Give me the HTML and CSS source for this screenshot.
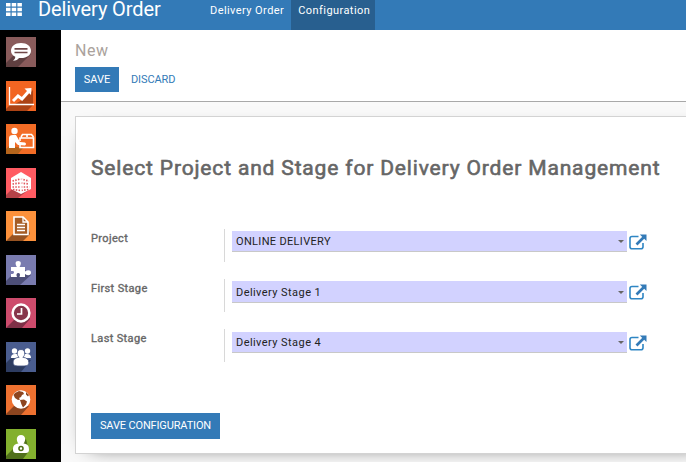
FILE: index.html
```
<!DOCTYPE html>
<html lang="en">
<head>
<meta charset="utf-8">
<title>Delivery Order</title>
<link rel="stylesheet" href="styles.css">
</head>
<body>
<header class="navbar">
  <svg class="apps" width="16" height="13" viewBox="0 0 16 13" fill="#fff"><path d="M0 0h4.500v3.400H0zM5.700 0h4.500v3.400H5.700zM11.400 0h4.500v3.400h-4.500zM0 4.800h4.500v3.400H0zM5.700 4.800h4.500v3.400H5.700zM11.400 4.800h4.500v3.400h-4.500zM0 9.600h4.500V13H0zM5.700 9.600h4.500V13H5.700zM11.400 9.600h4.500V13h-4.500z"/></svg>
  <div class="brand">Delivery Order</div>
  <nav class="menu">
    <a class="menu-item">Delivery Order</a>
    <a class="menu-item active">Configuration</a>
  </nav>
</header>
<div class="layout">
  <aside class="sidebar">
    <svg class="app" viewBox="0 0 30 30"><path fill="#895b5b" d="M0 0h30v30H0z"/><path fill="#5f3f40" d="M7 19 0 26v4h12l13-13-5-9z"/><path fill="#fff" d="M15 6c6 0 10 3.400 10 7.700S21 21 15 21l-2-.1c-1 1.600-3 2.800-6 2.800 1.500-1 2.200-2.300 2.300-3.900C6.600 18.500 5 16.400 5 13.700 5 9.400 9 6 15 6z"/><path stroke="#704849" stroke-width="1.700" d="M8.500 11.800h13M8.500 15.500h13"/></svg>
    <svg class="app" viewBox="0 0 30 30"><path fill="#f26522" d="M0 0h30v30H0z"/><path fill="#ac4315" d="m4 24-4 4v2h21l6-6V9l-9 9-9 5z"/><path fill="none" stroke="#fff" stroke-width="1.300" d="M3.500 6v17.500H28"/><path fill="none" stroke="#fff" stroke-width="3" d="m7 20 5-5 4 3 7-8"/><path fill="#fff" d="m18.500 7.500 7-.5-.5 7z"/></svg>
    <svg class="app" viewBox="0 0 30 30"><path fill="#f26c25" d="M0 0h30v30H0z"/><path fill="#b5651c" d="m3 22-3 3v5h12l5-6z"/><circle cx="8.500" cy="7" r="3.200" fill="#fff"/><path fill="#fff" d="M3 24V14q0-3 4-3h3l4 7 5 .5q2 1.500 0 3l-7-.5-3-3v6z"/><path fill="none" stroke="#fff" stroke-width="1.600" d="M14 17v-3h13.500v9.500H14V21M15 13l1.500-2.500h9l2 2.500M21 10v3"/></svg>
    <svg class="app" viewBox="0 0 30 30"><path fill="#ff5b62" d="M0 0h30v30H0z"/><path fill="#b54248" d="m6 21-6 6v3h12l13-10-10 4z"/><path fill="#fff" d="m15 4 10 6v11l-10 5-10-5V10z"/><path fill="none" stroke="#e0565c" stroke-width="1.700" stroke-dasharray="1.500 1.300" d="m6.500 13 8-2 8.500 2M6.500 16l8-1 8.500 1M6.500 19h17M7 21.500l7.500 1 8.500-1"/><path stroke="#fff" stroke-width="1.300" d="M15 5v20"/></svg>
    <svg class="app" viewBox="0 0 30 30"><path fill="#fc913b" d="M0 0h30v30H0z"/><path fill="#965322" d="m8 22-8 8h17l7-7-4-14z"/><path fill="#a45c25" stroke="#fff" stroke-width="1.600" d="M8 6h9l5 5v12.500H8z"/><path fill="none" stroke="#fff" stroke-width="1.300" d="M17 6v5h5M11 13.500h8M11 16.500h8M11 19.500h8"/></svg>
    <svg class="app" viewBox="0 0 30 30"><path fill="#797baf" d="M0 0h30v30H0z"/><path fill="#4d4f78" d="m5 21-5 5v4h14l11-10-6-5z"/><path fill="#fff" d="M5 12h6c-2-3-2-6 1.200-6s3.300 3 1.300 6H19v4.500c3-2 6-1.500 6 1.200S22 21 19 19v3h-5.500c1-2.500.5-4-1.300-4S10 20 11 22H5v-3c2 0 3-.5 3-1.800S7 16 5 16z"/></svg>
    <svg class="app" viewBox="0 0 30 30"><path fill="#cd4b6c" d="M0 0h30v30H0z"/><path fill="#7f3047" d="m8 22-8 8h16l8-9-8-13z"/><circle cx="15" cy="15" r="8.400" fill="#87354b" stroke="#fff" stroke-width="2.500"/><path fill="none" stroke="#fff" stroke-width="1.700" d="M15.500 10v6H11"/></svg>
    <svg class="app" viewBox="0 0 30 30"><path fill="#4a5d8f" d="M0 0h30v30H0z"/><path fill="#2d3c61" d="m5 16-5 5v9h15l10-12z"/><g fill="#fff"><circle cx="8.500" cy="9" r="2.700"/><circle cx="21.500" cy="9" r="2.700"/><path d="M5 16q0-4 4-4h12q4 0 4 4z"/></g><path fill="#fff" stroke="#40517f" stroke-width=".8" d="M15 7.500c5 0 4.300 6.500 1.800 7.800 3.700.3 6 2 6 5.200 0 3-1.500 3.500-7.800 3.500s-7.800-.5-7.800-3.500c0-3.200 2.300-4.900 6-5.200C10.700 14 10 7.500 15 7.500z"/></svg>
    <svg class="app" viewBox="0 0 30 30"><path fill="#ee7130" d="M0 0h30v30H0z"/><path fill="#8d451f" d="m8 21-8 8v1h15l8-9z"/><circle cx="15" cy="14.500" r="9.300" fill="#fff"/><path fill="#8d451f" d="m9 8 4-2 4 1 1 2-2 1-1 2-2 1 1 1.500-2 .5-3-2-1.500-3zM14 15l4-.5 3 2-1 3-3 3-1.500-3zM20 7l3 3-1 1.500-2-2z"/></svg>
    <svg class="app" viewBox="0 0 30 30"><path fill="#83b02e" d="M0 0h30v30H0z"/><path fill="#50701b" d="m7 20-7 7v3h17l6-8-3-12z"/><path fill="#fff" d="M15 6c5 0 5 6 2.500 8.500C22 15 23 17 23 21q0 3-3 3H10q-3 0-3-3c0-4 1-6 5.500-6.500C10 12 10 6 15 6z"/><circle cx="15" cy="19.500" r="2" fill="#fff" stroke="#50701b" stroke-width="1.600"/></svg>
  </aside>
  <main class="content">
    <section class="control">
      <div class="crumb">New</div>
      <div class="actions"><button class="btn save">SAVE</button><button class="discard">DISCARD</button></div>
    </section>
    <section class="sheet-bg">
      <div class="sheet">
        <h1>Select Project and Stage for Delivery Order Management</h1>
        <div class="row">
          <label>Project</label>
          <div class="cell"><div class="field upper"><span>ONLINE DELIVERY</span><i class="caret"></i></div>
          <svg class="ext" viewBox="0 0 18 16"><path d="M9.500 2.500H3q-2 0-2 2v8.300q0 2 2 2h9q2 0 2-2V9" fill="none" stroke="#2f86c4" stroke-width="1.600"/><path d="M7.500 10.500 14.500 3.500" stroke="#337ab7" stroke-width="2.600"/><path d="M10.800.5H17.500V7z" fill="#337ab7"/></svg></div>
        </div>
        <div class="row">
          <label>First Stage</label>
          <div class="cell"><div class="field tall"><span>Delivery Stage 1</span><i class="caret"></i></div>
          <svg class="ext" viewBox="0 0 18 16"><path d="M9.500 2.500H3q-2 0-2 2v8.300q0 2 2 2h9q2 0 2-2V9" fill="none" stroke="#2f86c4" stroke-width="1.600"/><path d="M7.500 10.500 14.500 3.500" stroke="#337ab7" stroke-width="2.600"/><path d="M10.800.5H17.500V7z" fill="#337ab7"/></svg></div>
        </div>
        <div class="row">
          <label>Last Stage</label>
          <div class="cell last"><div class="field"><span>Delivery Stage 4</span><i class="caret"></i></div>
          <svg class="ext" viewBox="0 0 18 16"><path d="M9.500 2.500H3q-2 0-2 2v8.300q0 2 2 2h9q2 0 2-2V9" fill="none" stroke="#2f86c4" stroke-width="1.600"/><path d="M7.500 10.500 14.500 3.500" stroke="#337ab7" stroke-width="2.600"/><path d="M10.800.5H17.500V7z" fill="#337ab7"/></svg></div>
        </div>
        <button class="btn config">SAVE CONFIGURATION</button>
      </div>
    </section>
  </main>
</div>
</body>
</html>
```
FILE: styles.css
```
* { box-sizing: border-box; }
body { margin: 0; width: 686px; height: 462px; overflow: hidden; font: 11px/16px Roboto, sans-serif; color: #222; background: #fff; }
button { border: 0; padding: 0; font: inherit; background: none; }
.navbar { display: flex; height: 30px; background: #337ab7; color: #fff; }
.apps { margin: 3px 0 0 6px; width: 16px; }
.brand { width: 160px; margin-left: 16px; font-size: 20px; line-height: 18px; letter-spacing: -.1px; white-space: nowrap; }
.menu { display: flex; margin-left: 4px; }
.menu-item { height: 30px; padding: 3px 7px 0 8px; letter-spacing: .43px; white-space: nowrap; }
.active { width: 84px; padding-left: 7px; background: #285f8f; }
.layout { display: flex; height: 432px; }
.sidebar { width: 61px; flex: none; padding: 7px 0 0 6px; background: #000; display: flex; flex-direction: column; gap: 13.5px; }
.app { width: 30px; height: 30px; flex: none; display: block; }
.content { flex: 1; min-width: 0; display: flex; flex-direction: column; }
.control { height: 72px; flex: none; padding: 11px 14px 0; border-bottom: 1px solid #a8a8a8; }
.crumb { color: #aaa29c; font-size: 16px; line-height: 20px; letter-spacing: .5px; }
.actions { display: flex; margin-top: 6px; gap: 12px; }
.btn { background: #337ab7; color: #fff; }
.save { width: 44px; height: 25px; letter-spacing: -.05px; }
.discard { color: #337ab7; letter-spacing: -.1px; }
.sheet-bg { flex: 1; padding: 14px 0 0 14px; background: #f9f9f9; overflow: hidden; }
.sheet { width: 640px; height: 338px; padding: 38px 15px 0; background: #fff; border: 1px solid #d3d3d3; box-shadow: 0 5px 20px -15px #000; }
h1 { margin: 0 0 48px; font-size: 21px; line-height: 26px; font-weight: 400; -webkit-text-stroke: .6px #666; letter-spacing: .84px; color: #666; white-space: nowrap; }
.row { display: flex; height: 50px; }
label { width: 133px; flex: none; padding-top: 2px; -webkit-text-stroke: .35px #666; letter-spacing: .36px; color: #666; }
.cell { display: flex; height: 33px; padding: 2px 0 0 7px; border-left: 1px solid #d8d8d8; }
.last { padding-top: 3px; }
.field { width: 395px; height: 21px; display: flex; align-items: center; justify-content: space-between; padding: 1px 3px 0 4px; background: #d2d2ff; border-bottom: 1px solid #c8c8c8; letter-spacing: .43px; }
.upper { letter-spacing: .33px; }
.tall { height: 22px; padding-top: 2px; }
.caret { width: 6px; height: 3px; border: solid transparent; border-width: 3px 3px 0; border-top-color: #666; }
.ext { width: 18px; height: 16px; margin: 3px 0 0 2px; }
.config { display: block; width: 129px; height: 26px; margin-top: 34px; letter-spacing: -.15px; }
```
